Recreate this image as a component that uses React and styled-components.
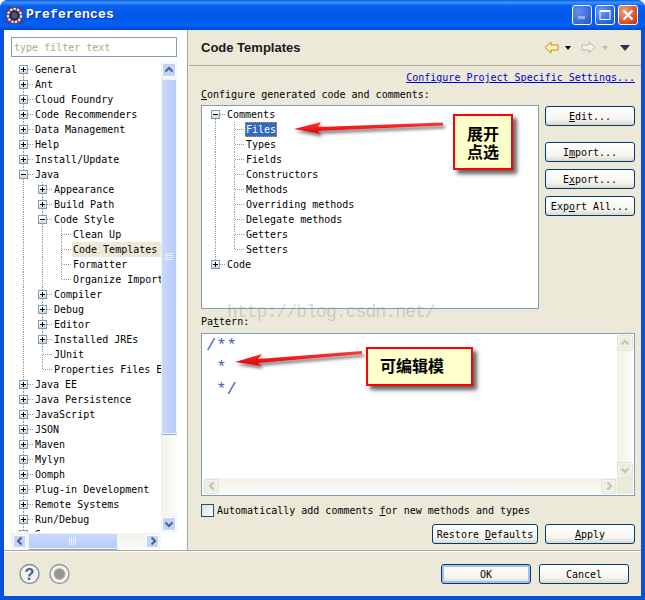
import React from "react";
import styled, { createGlobalStyle } from "styled-components";

const Global = createGlobalStyle`
  html, body { margin: 0; padding: 0; background: #fff; }
  * { box-sizing: border-box; }
`;

const MONO = `"DejaVu Sans Mono", "Liberation Mono", monospace`;
const CJK = `"Noto Sans CJK SC", sans-serif`;

const Window = styled.div`
  position: relative;
  width: 645px;
  height: 600px;
  display: flex;
  flex-direction: column;
  border-radius: 8px 8px 0 0;
  overflow: hidden;
  background: #0a4fe0;
  font: 10px/15px ${MONO};
  color: #000;
`;

const TitleBar = styled.div`
  height: 30px;
  flex: none;
  display: flex;
  align-items: center;
  padding: 0 7px 0 6px;
  gap: 3px;
  background: linear-gradient(180deg, #0a5ae8 0%, #3a93ff 8%, #0a5ff0 20%, #0058e8 55%, #0060f5 85%, #0048c8 100%);
`;

const TitleText = styled.div`
  font: bold 13px/16px "Liberation Mono", monospace;
  letter-spacing: 0.2px;
  color: #fff;
  text-shadow: 1px 1px 0 #0f2f98;
  flex: 1;
`;

const WinBtn = styled.div`
  width: 20px;
  height: 20px;
  border: 1px solid #fff;
  border-radius: 3px;
  display: flex;
  align-items: center;
  justify-content: center;
  background: ${(p) =>
    p.$close
      ? "radial-gradient(circle at 30% 30%, #f0a080, #d84a20 70%, #b83010)"
      : p.$dim
      ? "radial-gradient(circle at 30% 30%, #6f93ea, #3a66d8 70%, #2a55c8)"
      : "radial-gradient(circle at 30% 30%, #6a9cf5, #2a62e0 70%, #1f50d0)"};
  opacity: ${(p) => (p.$dim ? 0.95 : 1)};
`;

const Frame = styled.div`
  flex: 1;
  margin: 0 4px 4px;
  background: #ece9d8;
  display: flex;
  flex-direction: column;
  min-height: 0;
`;

const Main = styled.div`
  height: 520px;
  display: flex;
  flex: none;
`;

const Sidebar = styled.div`
  width: 183px;
  flex: none;
  background: #fff;
  padding: 7px 0 0 7px;
  display: flex;
  flex-direction: column;
`;

const Filter = styled.div`
  width: 166px;
  height: 20px;
  border: 1px solid #7f9db9;
  padding: 1px 0 0 2px;
  color: #aca899;
  line-height: 18px;
  margin-bottom: 5px;
`;

const SideGrid = styled.div`
  display: grid;
  grid-template-columns: 150px 16px;
  grid-template-rows: 470px 17px;
  width: 166px;
`;

const Clip = styled.div`
  overflow: hidden;
  background: #fff;
`;

const Row = styled.div`
  height: 15px;
  display: flex;
  white-space: nowrap;
  padding-left: ${(p) => p.$pad}px;
`;

const Cell = styled.div`
  position: relative;
  width: 19px;
  height: 15px;
  flex: none;
  display: flex;
  align-items: center;
  justify-content: center;
  &::before {
    content: "";
    display: ${(p) => (p.$line ? "block" : "none")};
    position: absolute;
    left: 9px;
    top: ${(p) => (p.$start ? "8px" : "0")};
    bottom: ${(p) => (p.$end ? "8px" : "0")};
    border-left: 1px dotted #9a9a9a;
  }
  &::after {
    content: "";
    display: ${(p) => (p.$branch ? "block" : "none")};
    position: absolute;
    left: 10px;
    right: 0;
    top: 7px;
    border-top: 1px dotted #9a9a9a;
  }
`;

const Expander = styled.div`
  position: relative;
  z-index: 1;
  width: 9px;
  height: 9px;
  margin-right: 1px;
  border: 1px solid #7b9ebd;
  background: linear-gradient(180deg, #fff 20%, #d8d4c4 100%);
  &::before {
    content: "";
    position: absolute;
    left: 1px;
    right: 1px;
    top: 3px;
    height: 1px;
    background: #000;
  }
  &::after {
    content: "";
    display: ${(p) => (p.$open ? "none" : "block")};
    position: absolute;
    left: 3px;
    top: 1px;
    bottom: 1px;
    width: 1px;
    background: #000;
  }
`;

const Label = styled.div`
  padding: 0 ${(p) => (p.$sel || p.$focus ? 1 : 0)}px;
  margin-left: ${(p) => (p.$sel || p.$focus ? 1 : 2)}px;
  flex: ${(p) => (p.$fill ? 1 : "none")};
  background: ${(p) => (p.$sel ? "#ece9d8" : p.$focus ? "#316ac5" : "transparent")};
  color: ${(p) => (p.$focus ? "#fff" : "#000")};
  outline: ${(p) => (p.$focus ? "1px dotted #c9a227" : "none")};
  outline-offset: -1px;
`;

const ScrollV = styled.div`
  display: flex;
  flex-direction: column;
  gap: 1px;
  height: 100%;
  background: ${(p) => (p.$grey ? "linear-gradient(90deg, #f3f2ea, #fbfbf8)" : "linear-gradient(90deg, #f3f2ea, #fbfbf8)")};
`;

const ScrollH = styled(ScrollV)`
  flex-direction: row;
  align-items: center;
  align-self: end;
  padding: 0 1px;
  width: 100%;
  height: 16px;
  background: linear-gradient(180deg, #f3f2ea, #fbfbf8);
`;

const ArrowBtn = styled.div`
  width: ${(p) => (p.$wide ? 16 : 15)}px;
  height: ${(p) => (p.$wide ? 16 : 15)}px;
  flex: none;
  align-self: center;
  border: 1px solid ${(p) => (p.$grey ? "#e4e2d6" : "#eef2fd")};
  border-radius: 2px;
  display: flex;
  align-items: center;
  justify-content: center;
  background: ${(p) => (p.$grey ? "#eeede5" : "#c1d3fb")};
  box-shadow: 0 0 0 1px ${(p) => (p.$grey ? "#f4f3ec" : "#fff")} inset;
`;

const Thumb = styled.div`
  flex: none;
  height: ${(p) => (p.$h ? p.$h + "px" : "16px")};
  width: ${(p) => (p.$w ? p.$w + "px" : "16px")};
  border: 1px solid #eef2fd;
  border-radius: 2px;
  background: ${(p) =>
    p.$row
      ? "linear-gradient(180deg, #c9d8fc, #b8ccf8)"
      : "linear-gradient(90deg, #c9d8fc, #b8ccf8)"};
  box-shadow: 0 1px 0 #8fa8d8;
  display: flex;
  align-items: center;
  justify-content: center;
`;

const Spacer = styled.div`
  flex: 1;
`;

const Corner = styled.div`
  background: ${(p) => (p.$cream ? "#ece9d8" : "#fff")};
`;

const Sash = styled.div`
  width: 2px;
  flex: none;
  background: #ece9d8;
  border-left: 1px solid #aca899;
`;

const Content = styled.div`
  flex: 1;
  min-width: 0;
  padding: 0 6px 0 12px;
  display: flex;
  flex-direction: column;
  background: #ece9d8;
`;

const Header = styled.div`
  height: 36px;
  margin: 0 -6px 0 -12px;
  padding: 0 11px 0 12px;
  flex: none;
  display: flex;
  align-items: center;
  border-bottom: 1px solid #aca899;
`;

const Heading = styled.div`
  flex: 1;
  font: bold 13px/16px "Liberation Sans", Arial, sans-serif;
  color: #1a1a1a;
`;

const NavGroup = styled.div`
  display: flex;
  align-items: center;
  margin-left: ${(p) => p.$left || 0}px;
  gap: 6px;
`;

const LinkRow = styled.div`
  margin-top: 4px;
  height: 15px;
  text-align: right;
  color: #00c;
  text-decoration: underline;
`;

const Caption = styled.div`
  height: 15px;
  margin-top: ${(p) => p.$top || 0}px;
`;

const Templates = styled.div`
  display: flex;
  gap: 6px;
  margin-top: 3px;
`;

const TreeBox = styled.div`
  width: 338px;
  height: 204px;
  background: #fff;
  border: 1px solid #7f9db9;
  padding: 1px 0 0 0;
  overflow: hidden;
`;

const SideButtons = styled.div`
  display: flex;
  flex-direction: column;
  padding-top: 1px;
  width: 90px;
`;

const Btn = styled.div`
  width: ${(p) => p.$w || 90}px;
  height: 20px;
  margin-top: ${(p) => p.$top || 0}px;
  flex: none;
  border: 1px solid #003c74;
  border-radius: 3px;
  text-align: center;
  line-height: 20px;
  background: linear-gradient(180deg, #fff 0%, #f5f4ee 70%, #dcd8cc 100%);
  box-shadow: ${(p) => (p.$def ? "inset 0 0 0 2px #a6c0ee" : "none")};
`;

const Editor = styled.div`
  height: 163px;
  margin-top: 4px;
  display: grid;
  grid-template-columns: 1fr 16px;
  grid-template-rows: 1fr 16px;
  border: 1px solid #7f9db9;
  background: #fff;
  padding: 1px;
`;

const Code = styled.pre`
  margin: 0;
  padding: 0 0 0 3px;
  font: 17px/22px "Liberation Mono", monospace;
  color: #3f5fbf;
`;

const CheckRow = styled.div`
  margin-top: 7px;
  height: 15px;
  display: flex;
  align-items: center;
  gap: 3px;
`;

const Check = styled.div`
  width: 13px;
  height: 13px;
  margin-top: -1px;
  border: 1px solid #1c5180;
  background: linear-gradient(135deg, #dcdcd7, #fff);
`;

const Actions = styled.div`
  margin-top: 6px;
  display: flex;
  justify-content: flex-end;
  gap: 7px;
`;

const Footer = styled.div`
  flex: 1;
  border-top: 1px solid #aca899;
  display: flex;
  align-items: center;
  padding: 0 12px 0 15px;
  gap: 8px;
  box-shadow: inset 0 1px 0 #fff;
`;

const FootIcons = styled.div`
  flex: 1;
  display: flex;
  gap: 9px;
  margin-top: 1px;
`;

const Note = styled.div`
  position: absolute;
  left: ${(p) => p.$x}px;
  top: ${(p) => p.$y}px;
  width: ${(p) => p.$w}px;
  height: ${(p) => p.$h}px;
  border: 2px solid #f00;
  background: #ffffcc;
  box-shadow: 4px 4px 4px #666;
  font: bold 16px/18px ${CJK};
  color: #000;
  text-align: ${(p) => (p.$left ? "left" : "center")};
  padding: ${(p) => (p.$left ? "7px 0 0 12px" : "8px 0 0")};
`;

const Watermark = styled.div`
  position: absolute;
  left: 227px;
  top: 301px;
  font: 18px/22px "Liberation Mono", monospace;
  letter-spacing: -0.9px;
  color: rgba(150, 150, 150, 0.38);
  white-space: nowrap;
`;

const Overlay = styled.svg`
  position: absolute;
  left: 0;
  top: 0;
  pointer-events: none;
`;

const Chevron = ({ dir, grey }) => {
  const rot = { up: 0, down: 180, left: -90, right: 90 }[dir];
  return (
    <svg width="10" height="10" viewBox="0 0 10 10">
      <path
        d="M1.5 6.5 L5 3 L8.5 6.5"
        transform={`rotate(${rot} 5 5)`}
        fill="none"
        stroke={grey ? "#c4c2b6" : "#4d6185"}
        strokeWidth="2"
      />
    </svg>
  );
};

const Grip = ({ row }) => (
  <svg width="10" height="10" viewBox="0 0 10 10">
    {[1, 3, 5, 7].map((n) =>
      row ? (
        <rect key={n} x={n} y="1" width="1" height="8" fill="#eef3fe" />
      ) : (
        <rect key={n} x="1" y={n} width="8" height="1" fill="#eef3fe" />
      )
    )}
  </svg>
);

const GearIcon = () => (
  <svg width="17" height="17" viewBox="0 0 17 17">
    <rect width="17" height="17" fill="#4b3f86" rx="2" />
    <circle cx="8.5" cy="8.5" r="6.5" fill="none" stroke="#e8e4d8" strokeWidth="2.4" strokeDasharray="2.4 1.2" />
    <circle cx="8.5" cy="8.5" r="5" fill="#2b2744" />
    <circle cx="8.5" cy="8.5" r="3" fill="#5a5470" />
  </svg>
);

const NavArrow = ({ back }) => (
  <svg width="15" height="13" viewBox="0 0 15 13">
    <path
      d={back ? "M1 6.5 L7 1 V4 H14 V9 H7 V12 Z" : "M14 6.5 L8 1 V4 H1 V9 H8 V12 Z"}
      fill={back ? "#fff0b8" : "#f2f1ea"}
      stroke={back ? "#c88a1c" : "#b8b8b0"}
      strokeLinejoin="round"
    />
  </svg>
);

const Tri = ({ c, w = 6, h = 4 }) => (
  <svg width={w} height={h} viewBox={`0 0 ${w} ${h}`}>
    <path d={`M0 0 H${w} L${w / 2} ${h} Z`} fill={c} />
  </svg>
);

const HelpIcon = () => (
  <svg width="21" height="22" viewBox="0 0 21 22">
    <circle cx="10.5" cy="11" r="9.5" fill="#f4f3ee" stroke="#7e8fa8" strokeWidth="1.4" />
    <text x="10.5" y="17" textAnchor="middle" fontFamily="Liberation Sans" fontWeight="bold" fontSize="16" fill="#3f5f8f">?</text>
  </svg>
);

const RecIcon = () => (
  <svg width="21" height="22" viewBox="0 0 21 22">
    <circle cx="10.5" cy="11" r="9.5" fill="#f4f3ee" stroke="#9098a8" strokeWidth="1.4" />
    <circle cx="10.5" cy="11" r="5.5" fill="#96968e" stroke="#b8b8b0" />
  </svg>
);

const leftTree = [
  { t: "General", d: 0, e: "+", first: true },
  { t: "Ant", d: 0, e: "+" },
  { t: "Cloud Foundry", d: 0, e: "+" },
  { t: "Code Recommenders", d: 0, e: "+" },
  { t: "Data Management", d: 0, e: "+" },
  { t: "Help", d: 0, e: "+" },
  { t: "Install/Update", d: 0, e: "+" },
  { t: "Java", d: 0, e: "-" },
  { t: "Appearance", d: 1, e: "+" },
  { t: "Build Path", d: 1, e: "+" },
  { t: "Code Style", d: 1, e: "-" },
  { t: "Clean Up", d: 2 },
  { t: "Code Templates", d: 2, sel: true },
  { t: "Formatter", d: 2 },
  { t: "Organize Import", d: 2, end: true },
  { t: "Compiler", d: 1, e: "+" },
  { t: "Debug", d: 1, e: "+" },
  { t: "Editor", d: 1, e: "+" },
  { t: "Installed JREs", d: 1, e: "+" },
  { t: "JUnit", d: 1 },
  { t: "Properties Files Editor", d: 1, end: true },
  { t: "Java EE", d: 0, e: "+" },
  { t: "Java Persistence", d: 0, e: "+" },
  { t: "JavaScript", d: 0, e: "+" },
  { t: "JSON", d: 0, e: "+" },
  { t: "Maven", d: 0, e: "+" },
  { t: "Mylyn", d: 0, e: "+" },
  { t: "Oomph", d: 0, e: "+" },
  { t: "Plug-in Development", d: 0, e: "+" },
  { t: "Remote Systems", d: 0, e: "+" },
  { t: "Run/Debug", d: 0, e: "+" },
  { t: "Server", d: 0, e: "+" },
];

const rightTree = [
  { t: "Comments", d: 0, e: "-", first: true },
  { t: "Files", d: 1, focus: true },
  { t: "Types", d: 1 },
  { t: "Fields", d: 1 },
  { t: "Constructors", d: 1 },
  { t: "Methods", d: 1 },
  { t: "Overriding methods", d: 1 },
  { t: "Delegate methods", d: 1 },
  { t: "Getters", d: 1 },
  { t: "Setters", d: 1, end: true },
  { t: "Code", d: 0, e: "+", end: true },
];

const TreeRow = ({ n, pad, fill }) => {
  const cells = [];
  for (let i = 0; i < n.d; i++) cells.push(<Cell key={i} $line />);
  cells.push(
    <Cell key="own" $line $start={n.first} $end={n.end} $branch>
      {n.e ? <Expander $open={n.e === "-"} /> : null}
    </Cell>
  );
  return (
    <Row $pad={pad}>
      {cells}
      <Label $sel={n.sel} $focus={n.focus} $fill={n.sel && fill}>{n.t}</Label>
    </Row>
  );
};

const Mn = ({ pre, u, post }) => (
  <>
    {pre}
    <u>{u}</u>
    {post}
  </>
);

export default function App() {
  return (
    <Window>
      <Global />
      <TitleBar>
        <GearIcon />
        <TitleText>Preferences</TitleText>
        <WinBtn $dim>
          <svg width="10" height="10" viewBox="0 0 10 10"><rect x="1" y="6" width="7" height="3" fill="#9db8ee" /></svg>
        </WinBtn>
        <WinBtn>
          <svg width="12" height="12" viewBox="0 0 12 12"><rect x="1" y="1.5" width="10" height="9" fill="none" stroke="#fff" /><rect x="1" y="1" width="10" height="2" fill="#fff" /></svg>
        </WinBtn>
        <WinBtn $close>
          <svg width="12" height="12" viewBox="0 0 12 12"><path d="M1.5 1.5 L10.5 10.5 M10.5 1.5 L1.5 10.5" stroke="#fff" strokeWidth="2.2" /></svg>
        </WinBtn>
      </TitleBar>
      <Frame>
        <Main>
          <Sidebar>
            <Filter>type filter text</Filter>
            <SideGrid>
              <Clip>
                {leftTree.map((n) => (
                  <TreeRow key={n.t} n={n} pad={3} fill />
                ))}
              </Clip>
              <ScrollV>
                <ArrowBtn $wide><Chevron dir="up" /></ArrowBtn>
                <Thumb $h={355}><Grip /></Thumb>
                <Spacer />
                <ArrowBtn $wide><Chevron dir="down" /></ArrowBtn>
              </ScrollV>
              <ScrollH>
                <ArrowBtn><Chevron dir="left" /></ArrowBtn>
                <Thumb $row $w={90}><Grip row /></Thumb>
                <Spacer />
                <ArrowBtn><Chevron dir="right" /></ArrowBtn>
              </ScrollH>
              <Corner />
            </SideGrid>
          </Sidebar>
          <Sash />
          <Content>
            <Header>
              <Heading>Code Templates</Heading>
              <NavGroup>
                <NavArrow back />
                <Tri c="#000" />
              </NavGroup>
              <NavGroup $left={10}>
                <NavArrow />
                <Tri c="#bbb" />
              </NavGroup>
              <NavGroup $left={12}>
                <Tri c="#3a2a5a" w={10} h={6} />
              </NavGroup>
            </Header>
            <LinkRow>Configure Project Specific Settings...</LinkRow>
            <Caption $top={2}>
              <Mn pre="" u="C" post="onfigure generated code and comments:" />
            </Caption>
            <Templates>
              <TreeBox>
                {rightTree.map((n) => (
                  <TreeRow key={n.t} n={n} pad={4} />
                ))}
              </TreeBox>
              <SideButtons>
                <Btn><Mn pre="" u="E" post="dit..." /></Btn>
                <Btn $top={16}><Mn pre="I" u="m" post="port..." /></Btn>
                <Btn $top={7}><Mn pre="E" u="x" post="port..." /></Btn>
                <Btn $top={7}><Mn pre="Exp" u="o" post="rt All..." /></Btn>
              </SideButtons>
            </Templates>
            <Caption $top={5}>
              <Mn pre="Pa" u="t" post="tern:" />
            </Caption>
            <Editor>
              <Code>{"/**\n *\n */"}</Code>
              <ScrollV $grey>
                <ArrowBtn $grey $wide><Chevron dir="up" grey /></ArrowBtn>
                <Spacer />
                <ArrowBtn $grey $wide><Chevron dir="down" grey /></ArrowBtn>
              </ScrollV>
              <ScrollH $grey>
                <ArrowBtn $grey><Chevron dir="left" grey /></ArrowBtn>
                <Spacer />
                <ArrowBtn $grey><Chevron dir="right" grey /></ArrowBtn>
              </ScrollH>
              <Corner $cream />
            </Editor>
            <CheckRow>
              <Check />
              <span>Automatically add comments <u>f</u>or new methods and types</span>
            </CheckRow>
            <Actions>
              <Btn $w={106}><Mn pre="Restore " u="D" post="efaults" /></Btn>
              <Btn><Mn pre="" u="A" post="pply" /></Btn>
            </Actions>
          </Content>
        </Main>
        <Footer>
          <FootIcons>
            <HelpIcon />
            <RecIcon />
          </FootIcons>
          <Btn $def>OK</Btn>
          <Btn>Cancel</Btn>
        </Footer>
      </Frame>

      <Watermark>http://blog.csdn.net/</Watermark>
      <Note $x={453} $y={114} $w={60} $h={56}>展开<br />点选</Note>
      <Note $x={366} $y={347} $w={107} $h={39} $left>可编辑模</Note>

      <Overlay width="645" height="600" viewBox="0 0 645 600">
        <defs>
          <linearGradient id="red" x1="0" y1="0" x2="0" y2="1">
            <stop offset="0" stopColor="#ff3a3a" />
            <stop offset="1" stopColor="#e00000" />
          </linearGradient>
          <filter id="soft" x="-10%" y="-60%" width="120%" height="260%">
            <feDropShadow dx="2" dy="3" stdDeviation="1.6" floodColor="#555" floodOpacity="0.7" />
          </filter>
        </defs>
        <g filter="url(#soft)">
          <path d="M294 129 L321 122 L318 127 L443 122.5 L443 125.5 L318 131 L321 134 Z" fill="url(#red)" />
          <path d="M235 362 L262 354 L258 359 L362 351 L362 354 L258 363 L262 366 Z" fill="url(#red)" />
        </g>
      </Overlay>
    </Window>
  );
}
